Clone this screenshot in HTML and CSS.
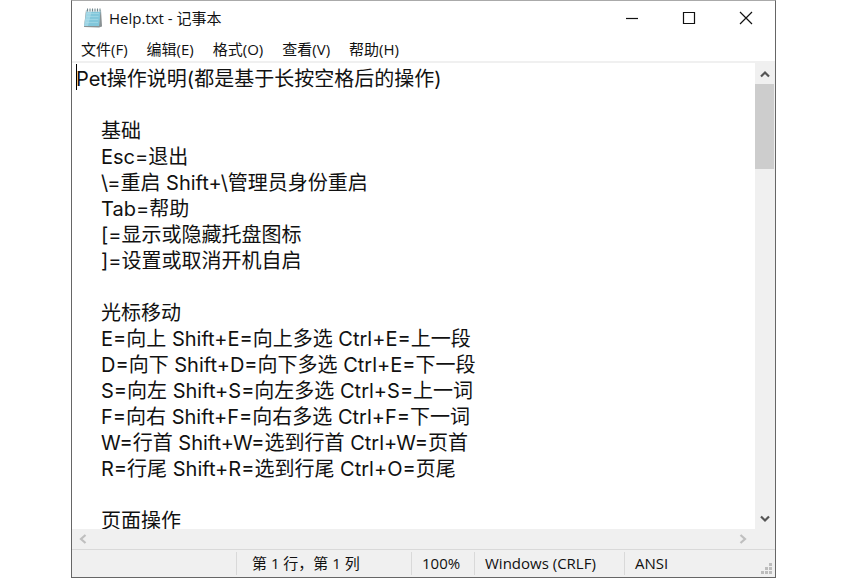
FILE: index.html
```html
<!DOCTYPE html>
<html lang="zh-CN">

<head>
    <meta charset="utf-8">
    <title>Help.txt - 记事本</title>
    <meta name="viewport" content="width=device-width, initial-scale=1">
    <link rel="stylesheet" href="styles.css">
</head>

<body>
    <div class="window">
        <header class="titlebar">
            <svg class="app-icon" width="20" height="20" viewBox="0 0 20 20">
                <path d="M3 2 L18 2 L19 18.500 L16 19.500 L1 19 Z" fill="#8a9294"/>
                <path d="M3.500 2 L17.500 2 L16 18 L1 18 Z" fill="#9fd6e6"/>
                <path d="M9 2 L17.500 2 L16 18 L5 18 Z" fill="#6fbcd4" opacity="0.6"/>
                <path d="M4 5.500 H16 M3.500 8.500 H15.500 M3.200 11.500 H15.200 M3 14.500 H15" stroke="#b4e0eb" stroke-width="0.5"/>
                <path d="M3.500 2.500 H17.500" stroke="#e8f0f2" stroke-width="2.5"/>
                <path d="M4.500 0.500 V3.500 M7 0.500 V3.500 M9.500 0.500 V3.500 M12 0.500 V3.500 M14.500 0.500 V3.500 M17 0.500 V3.500" stroke="#71858b" stroke-width="1"/>
            </svg>
            <h1 class="title">Help.txt - 记事本</h1>
            <div class="window-buttons">
                <button type="button" aria-label="最小化">
                    <svg width="14" height="14" viewBox="0 0 14 14"><path d="M1 7.500 H13"/></svg>
                </button>
                <button type="button" aria-label="最大化">
                    <svg width="14" height="14" viewBox="0 0 14 14"><path d="M1.500 1.500 H12.500 V12.500 H1.500 Z"/></svg>
                </button>
                <button type="button" aria-label="关闭">
                    <svg width="14" height="14" viewBox="0 0 14 14"><path d="M1 1 L13 13 M13 1 L1 13"/></svg>
                </button>
            </div>
        </header>

        <nav class="menubar">
            <button type="button">文件(F)</button>
            <button type="button">编辑(E)</button>
            <button type="button">格式(O)</button>
            <button type="button">查看(V)</button>
            <button type="button">帮助(H)</button>
        </nav>

        <main class="editor">
            <textarea class="text" id="text" aria-label="文本编辑器" wrap="off" spellcheck="false">Pet操作说明(都是基于长按空格后的操作)

&#9;基础
&#9;Esc=退出
&#9;\=重启 Shift+\管理员身份重启
&#9;Tab=帮助
&#9;[=显示或隐藏托盘图标
&#9;]=设置或取消开机自启

&#9;光标移动
&#9;E=向上 Shift+E=向上多选 Ctrl+E=上一段
&#9;D=向下 Shift+D=向下多选 Ctrl+E=下一段
&#9;S=向左 Shift+S=向左多选 Ctrl+S=上一词
&#9;F=向右 Shift+F=向右多选 Ctrl+F=下一词
&#9;W=行首 Shift+W=选到行首 Ctrl+W=页首
&#9;R=行尾 Shift+R=选到行尾 Ctrl+O=页尾

&#9;页面操作</textarea>
            <span class="caret"></span>
            <div class="scroll-v">
                <button type="button" aria-label="向上滚动">
                    <svg width="10" height="8" viewBox="0 0 10 8"><path d="M1 6.500 L5 2.500 L9 6.500"/></svg>
                </button>
                <div class="track"><div class="thumb"></div></div>
                <button type="button" aria-label="向下滚动">
                    <svg width="10" height="8" viewBox="0 0 10 8"><path d="M1 1.500 L5 5.500 L9 1.500"/></svg>
                </button>
            </div>
        </main>

        <div class="scroll-h">
            <button type="button" aria-label="向左滚动" disabled>
                <svg width="8" height="10" viewBox="0 0 8 10"><path d="M6.500 1 L2 5 L6.500 9"/></svg>
            </button>
            <button type="button" aria-label="向右滚动" disabled>
                <svg width="8" height="10" viewBox="0 0 8 10"><path d="M1.500 1 L6 5 L1.500 9"/></svg>
            </button>
        </div>

        <footer class="statusbar">
            <span class="cell position">第 1 行，第 1 列</span>
            <span class="cell zoom">100%</span>
            <span class="cell newline">Windows (CRLF)</span>
            <span class="cell encoding">ANSI</span>
            <svg class="grip" width="12" height="12" viewBox="0 0 12 12" fill="#bdbdbd">
                <path d="M8 0 h3 v3 h-3 Z M4 4 h3 v3 h-3 Z M8 4 h3 v3 h-3 Z M0 8 h3 v3 h-3 Z M4 8 h3 v3 h-3 Z M8 8 h3 v3 h-3 Z"/>
            </svg>
        </footer>
    </div>
</body>

</html>
```
FILE: styles.css
```css
* {
    box-sizing: border-box;
}

body {
    margin: 0;
    padding: 0 81px 0 71px;
    background: #fff;
    color: #111;
    font-family: "Open Sans", "Noto Sans CJK SC", sans-serif;
    font-size: 15px;
}

button {
    display: flex;
    align-items: center;
    justify-content: center;
    margin: 0;
    padding: 0;
    border: none;
    background: none;
    color: inherit;
    font: inherit;
}

svg {
    display: block;
    flex: none;
}

.window {
    display: flex;
    flex-direction: column;
    height: 100vh;
    border: 1px solid #666;
    border-top-color: #aaa;
    background: #fff;
}

/* Title bar */
.titlebar {
    display: flex;
    align-items: center;
    flex: none;
    height: 34px;
    padding-left: 11px;
}

.title {
    flex: 1;
    margin: 0;
    padding-left: 6px;
    font-size: 15px;
    font-weight: normal;
    line-height: 20px;
}

.window-buttons {
    display: flex;
    height: 34px;
    padding-right: 1px;
}

.window-buttons button {
    width: 57px;
}

.window-buttons path {
    fill: none;
    stroke: #111;
    stroke-width: 1.2;
}

/* Menu */
.menubar {
    display: flex;
    flex: none;
    gap: 19px;
    height: 28px;
    padding-left: 9px;
    border-bottom: 2px solid #f0f0f0;
}

/* Text area and scrollbars */
.editor {
    position: relative;
    display: flex;
    flex: 1;
    min-height: 0;
}

.text {
    flex: 1;
    min-width: 0;
    margin: 0;
    padding: 3px 0 0 4px;
    border: none;
    outline: none;
    resize: none;
    overflow: hidden;
    background: #fff;
    color: #111;
    font-family: Inter, "Noto Sans CJK SC", sans-serif;
    font-size: 20px;
    line-height: 26px;
    white-space: pre;
    tab-size: 25px;
}

.caret {
    position: absolute;
    top: 1px;
    left: 4px;
    width: 1px;
    height: 26px;
    background: #000;
}

.scroll-v {
    display: flex;
    flex-direction: column;
    flex: none;
    width: 20px;
    padding-right: 1px;
    background: #f0f0f0;
}

.scroll-v button {
    height: 21px;
}

.scroll-v path,
.scroll-h path {
    fill: none;
    stroke: #555;
    stroke-width: 2.2;
}

.track {
    flex: 1;
}

.thumb {
    height: 20%;
    background: #cdcdcd;
}

.scroll-h {
    display: flex;
    justify-content: space-between;
    flex: none;
    height: 20px;
    padding-right: 21px;
    background: #f0f0f0;
}

.scroll-h button {
    width: 22px;
}

.scroll-h path {
    stroke: #bfbfbf;
}

/* Status bar */
.statusbar {
    position: relative;
    display: flex;
    justify-content: flex-end;
    flex: none;
    height: 28px;
    border-top: 1px solid #d9d9d9;
    background: #f0f0f0;
}

.cell {
    margin: 2px 0;
    padding-left: 10px;
    border-left: 1px solid #d9d9d9;
    line-height: 23px;
    white-space: nowrap;
}

.position {
    width: 175px;
    padding-left: 15px;
}

.zoom {
    width: 63px;
}

.newline {
    width: 150px;
}

.encoding {
    width: 151px;
}

.grip {
    position: absolute;
    right: 2px;
    bottom: 2px;
}
```
